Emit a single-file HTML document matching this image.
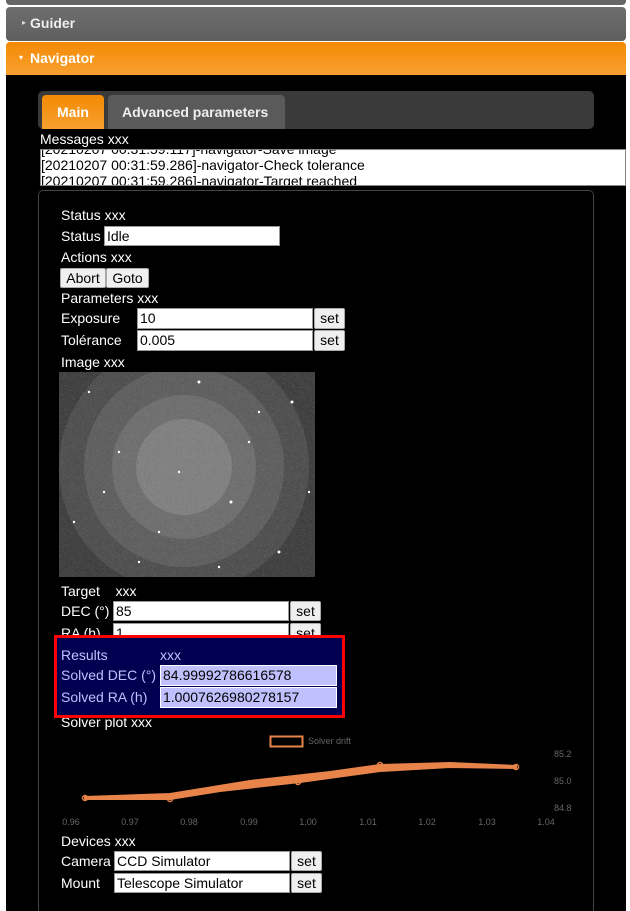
<!DOCTYPE html>
<html style="overflow:hidden"><head><meta charset="utf-8"><style>
*{box-sizing:border-box;margin:0;padding:0}
body{width:630px;height:911px;background:#fff;position:relative;overflow:hidden;font-family:"Liberation Sans",sans-serif;font-size:14px;color:#fff}
.a{position:absolute}
.t{position:absolute;white-space:nowrap;line-height:16px}
.in{position:absolute;background:#fff;border:1px solid #999;color:#000;padding-left:2px;line-height:18px;font-size:14px}
.bt{position:absolute;background:#efefef;border:1px solid #aaa;border-radius:2px;color:#000;text-align:center;line-height:18px}
.lv{background:#c0c0ff;border:1px solid #fff}
</style></head><body>
<div class="a" style="left:6px;top:0;width:620px;height:5px;background:#666;border-radius:0 0 4px 4px"></div>
<div class="a" style="left:6px;top:7px;width:620px;height:34px;background:linear-gradient(#6e6e6e,#5f5f5f);border-radius:4px"></div>
<div class="t" style="left:22px;top:15px;font-size:8px;color:#ddd">▸</div>
<div class="t" style="left:30px;top:15px;font-weight:bold;color:#eee">Guider</div>
<div class="a" style="left:6px;top:42px;width:620px;height:33px;background:linear-gradient(#f48a04,#f7a030);border-radius:4px 4px 0 0"></div>
<div class="t" style="left:19px;top:50px;font-size:8px">▾</div>
<div class="t" style="left:30px;top:50px;font-weight:bold">Navigator</div>
<div class="a" style="left:6px;top:75px;width:620px;height:836px;background:#000"></div>
<div class="a" style="left:38px;top:91px;width:556px;height:38px;background:#3a3a3a;border-radius:5px"></div>
<div class="a" style="left:42px;top:95px;width:62px;height:34px;background:linear-gradient(#f48a04,#f7a030);border-radius:4px 4px 0 0"></div>
<div class="t" style="left:57px;top:104px;font-weight:bold">Main</div>
<div class="a" style="left:108px;top:95px;width:177px;height:34px;background:#5a5a5a;border-radius:4px 4px 0 0"></div>
<div class="t" style="left:122px;top:104px;font-weight:bold;color:#eee">Advanced parameters</div>
<div class="t" style="left:40px;top:131px">Messages xxx</div>
<div class="a" style="left:40px;top:149px;width:586px;height:37px;background:#fff;overflow:hidden;color:#000;border:1px solid #888">
<div style="position:absolute;top:-9px;left:0;line-height:16px;white-space:nowrap">[20210207 00:31:59.117]-navigator-Save image<br>[20210207 00:31:59.286]-navigator-Check tolerance<br>[20210207 00:31:59.286]-navigator-Target reached</div></div>
<div class="a" style="left:38px;top:190px;width:556px;height:730px;border:1px solid #444;border-radius:5px"></div>
<div class="t" style="left:61px;top:207px">Status xxx</div>
<div class="t" style="left:61px;top:228px">Status</div><div class="in" style="left:104px;top:226px;width:176px;height:20px">Idle</div>
<div class="t" style="left:61px;top:249px">Actions xxx</div>
<div class="bt" style="left:60px;top:268px;width:46px;height:20px">Abort</div>
<div class="bt" style="left:106px;top:268px;width:43px;height:20px">Goto</div>
<div class="t" style="left:61px;top:290px">Parameters xxx</div>
<div class="t" style="left:61px;top:310px">Exposure</div><div class="in" style="left:137px;top:308px;width:176px;height:21px">10</div><div class="bt" style="left:314px;top:308px;width:31px;height:21px">set</div>
<div class="t" style="left:61px;top:332px">Tolérance</div><div class="in" style="left:137px;top:330px;width:176px;height:21px">0.005</div><div class="bt" style="left:314px;top:330px;width:31px;height:21px">set</div>
<div class="t" style="left:61px;top:354px">Image xxx</div>
<svg class="a" style="left:59px;top:372px" width="256" height="205">
<defs><filter id="n"><feTurbulence baseFrequency="0.9" numOctaves="1" seed="3"/><feColorMatrix values="0 0 0 0 1 0 0 0 0 1 0 0 0 0 1 0 0 0 .25 0"/></filter></defs>
<rect width="256" height="205" fill="#2e2e2e"/>
<circle cx="125" cy="95" r="170" fill="#3a3a3a"/>
<circle cx="125" cy="95" r="125" fill="#4a4a4a"/>
<circle cx="125" cy="95" r="100" fill="#5a5a5a"/>
<circle cx="125" cy="95" r="72" fill="#6a6a6a"/>
<circle cx="125" cy="95" r="48" fill="#7c7c7c"/>
<rect width="256" height="205" filter="url(#n)"/>
<g fill="#fff"><circle cx="30" cy="20" r="1.2"/><circle cx="140" cy="10" r="1.5"/><circle cx="200" cy="40" r="1.2"/><circle cx="233" cy="30" r="1.5"/><circle cx="60" cy="80" r="1.2"/><circle cx="172" cy="130" r="1.5"/><circle cx="100" cy="160" r="1.2"/><circle cx="220" cy="180" r="1.5"/><circle cx="15" cy="150" r="1.2"/><circle cx="250" cy="120" r="1.2"/><circle cx="120" cy="100" r="1.2"/><circle cx="80" cy="190" r="1.2"/><circle cx="190" cy="70" r="1.2"/><circle cx="45" cy="120" r="1.2"/><circle cx="160" cy="195" r="1.2"/></g>
</svg>
<div class="t" style="left:61px;top:583px">Target&nbsp;&nbsp;&nbsp; xxx</div>
<div class="t" style="left:61px;top:603px">DEC (°)</div><div class="in" style="left:113px;top:601px;width:176px;height:20px">85</div><div class="bt" style="left:290px;top:601px;width:31px;height:20px">set</div>
<div class="t" style="left:61px;top:625px">RA (h)</div><div class="in" style="left:113px;top:623px;width:176px;height:20px">1</div><div class="bt" style="left:290px;top:623px;width:31px;height:20px">set</div>
<div class="a" style="left:54px;top:635px;width:291px;height:83px;background:#000050;border:3px solid #f00"></div>
<div class="t" style="left:61px;top:647px;color:#c0c0ff">Results</div><div class="t" style="left:160px;top:647px;color:#c0c0ff">xxx</div>
<div class="t" style="left:61px;top:667px;color:#c0c0ff">Solved DEC (°)</div><div class="in lv" style="left:160px;top:665px;width:177px;height:21px">84.99992786616578</div>
<div class="t" style="left:61px;top:689px;color:#c0c0ff">Solved RA (h)</div><div class="in lv" style="left:160px;top:687px;width:177px;height:21px">1.0007626980278157</div>
<div class="t" style="left:61px;top:714px;clip-path:inset(4px 0 0 0)">Solver plot xxx</div>
<svg class="a" style="left:50px;top:730px" width="540" height="100" font-family="Liberation Sans" font-size="9" fill="#666">
<rect x="220.5" y="6.5" width="32" height="10" fill="none" stroke="#e8844a" stroke-width="2"/>
<text x="258" y="14">Solver drift</text>
<text x="504" y="27">85.2</text><text x="504" y="54">85.0</text><text x="504" y="81">84.8</text>
<g text-anchor="middle"><text x="21" y="95">0.96</text><text x="80" y="95">0.97</text><text x="139" y="95">0.98</text><text x="199" y="95">0.99</text><text x="258" y="95">1.00</text><text x="318" y="95">1.01</text><text x="377" y="95">1.02</text><text x="437" y="95">1.03</text><text x="496" y="95">1.04</text></g>
<path d="M35 67 L120 64 L200 51 L280 42 L330 35 L400 33 L466 36 L466 38 L400 37 L330 41 L250 52 L170 61 L120 69 L35 69Z" fill="#e8844a" stroke="#e8844a" stroke-width="2" stroke-linejoin="round"/>
<g fill="none" stroke="#e8844a" stroke-width="1.5"><circle cx="35" cy="68" r="2.5"/><circle cx="120" cy="69" r="2.5"/><circle cx="330" cy="35" r="2.5"/><circle cx="466" cy="37" r="2.5"/><circle cx="248" cy="52" r="2.5"/></g>
</svg>
<div class="t" style="left:61px;top:833px">Devices xxx</div>
<div class="t" style="left:61px;top:853px">Camera</div><div class="in" style="left:114px;top:851px;width:176px;height:20px">CCD Simulator</div><div class="bt" style="left:291px;top:851px;width:31px;height:20px">set</div>
<div class="t" style="left:61px;top:875px">Mount</div><div class="in" style="left:114px;top:873px;width:176px;height:20px">Telescope Simulator</div><div class="bt" style="left:291px;top:873px;width:31px;height:20px">set</div>
</body></html>
